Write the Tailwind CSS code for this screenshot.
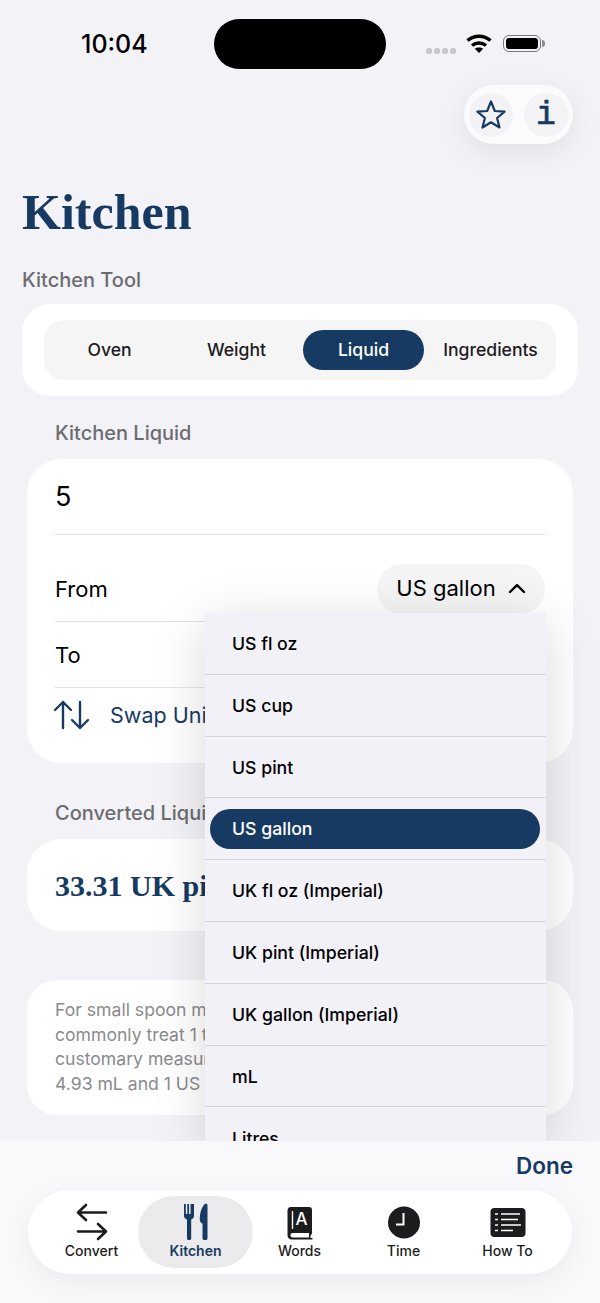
<!DOCTYPE html>
<html lang="en">
<head>
  <meta charset="UTF-8">
  <title>Kitchen</title>
  <meta name="viewport" content="width=device-width, initial-scale=1.0">
  <script src="https://cdn.jsdelivr.net/npm/@tailwindcss/browser@4"></script>
</head>
<body class="bg-[#f2f2f7]">
  <div class="relative w-[600px] h-[1303px] overflow-hidden bg-[#f2f2f7] font-['Inter','Noto_Sans',sans-serif] text-black">

    <!-- status bar -->
    <div class="h-[85px] flex items-start">
      <div class="w-[214px] pl-[81px] pt-[29px] text-[25px] leading-[30px] font-medium">10:04</div>
      <div class="mt-[19px] w-[172px] h-[50px] rounded-[25px] bg-black"></div>
      <div class="flex items-start pl-[40px] pt-[34px]">
        <div class="flex gap-[2px] mt-[14px]">
          <span class="w-[6px] h-[6px] rounded-[2px] bg-[#c9c9cd]"></span>
          <span class="w-[6px] h-[6px] rounded-[2px] bg-[#c9c9cd]"></span>
          <span class="w-[6px] h-[6px] rounded-[2px] bg-[#c9c9cd]"></span>
          <span class="w-[6px] h-[6px] rounded-[2px] bg-[#c9c9cd]"></span>
        </div>
        <svg class="ml-[10px]" width="26" height="19" viewBox="0 0 26 19" fill="none" stroke="#000" stroke-width="3.4">
          <path d="M1.5 6.5C8 0.8 18 0.8 24.5 6.5"/>
          <path d="M6 11.5C10 8.2 16 8.2 20 11.5"/>
          <path d="M13 19L8.8 14.8C11 13.2 15 13.2 17.2 14.8Z" fill="#000" stroke="none"/>
        </svg>
        <div class="ml-[11px] mt-[1px] w-[38px] h-[17px] rounded-[6px] border-[1.5px] border-[#77777c] p-[2px]">
          <div class="w-full h-full rounded-[3px] bg-black"></div>
        </div>
        <div class="ml-[1px] mt-[6px] w-[3px] h-[7px] rounded-r-full bg-[#8e8e93]"></div>
      </div>
    </div>

    <!-- star / info -->
    <div class="flex justify-end pr-[27px]">
      <div class="w-[109px] h-[59px] rounded-full bg-[#fbfbfd] shadow-[0_8px_30px_rgba(0,0,0,0.08)] flex items-center justify-between px-[5px]">
        <div class="w-[44px] h-[44px] rounded-full bg-[#f3f3f6] flex items-center justify-center">
          <svg width="32" height="32" viewBox="0 0 32 32" fill="none" stroke="#173a63" stroke-width="2.2" stroke-linejoin="round">
            <path d="M16 2.5L19.8 12L29.6 12.7L22.1 19L24.5 28.5L16 23.3L7.5 28.5L9.9 19L2.4 12.7L12.2 12Z"/>
          </svg>
        </div>
        <div class="w-[44px] h-[44px] rounded-full bg-[#f3f3f6] flex items-center justify-center pt-[3px] text-[#173a63] text-[33px] [-webkit-text-stroke:0.7px_#173a63] font-['Liberation_Mono',monospace]">i</div>
      </div>
    </div>

    <h1 class="mt-[38px] pl-[22px] text-[#173a63] text-[50px] leading-[60px] font-bold font-['Liberation_Serif',serif]">Kitchen</h1>

    <div class="mt-[22px] pl-[22px] text-[20px] leading-[32px] font-medium text-[#6c6c70]">Kitchen Tool</div>

    <div class="mt-[8px] mx-[22px] h-[92px] rounded-[28px] bg-white flex items-center px-[22px]">
      <div class="w-full h-[60px] rounded-[20px] bg-[#f5f5f5] grid grid-cols-4 items-center text-[17.6px] font-[450] text-center text-[#1c1c1e] px-[2px]">
        <div>Oven</div>
        <div>Weight</div>
        <div class="h-[40px] w-[121px] justify-self-center rounded-full bg-[#173a63] text-white flex items-center justify-center">Liquid</div>
        <div>Ingredients</div>
      </div>
    </div>

    <div class="mt-[21px] pl-[55px] text-[20px] leading-[32px] font-medium text-[#6c6c70]">Kitchen Liquid</div>

    <div class="mt-[10px] mx-[27px] h-[304px] rounded-[34px] bg-white px-[28px]">
      <div class="h-[76px] border-b border-[#e3e3e6] flex items-center text-[27px] pt-[2px]">5</div>
      <div class="h-[87px] border-b border-[#e3e3e6] flex items-center justify-between text-[22px] pt-[21px]">
        <span class="mt-[2px]">From</span>
        <span class="h-[50px] w-[168px] rounded-full bg-[#f5f5f5] flex items-center justify-center gap-[12px]">US gallon
          <svg width="18" height="11" viewBox="0 0 18 11" fill="none" stroke="#000" stroke-width="2.4" stroke-linecap="round" stroke-linejoin="round"><path d="M2 9L9 2.2L16 9"/></svg>
        </span>
      </div>
      <div class="h-[66px] border-b border-[#e3e3e6] flex items-center text-[22px] pt-[2px]">To</div>
      <div class="h-[54px] flex items-center text-[21.5px] text-[#173a63]">
        <svg class="-ml-[2px]" width="38" height="32" viewBox="0 0 38 32" fill="none" stroke="#173a63" stroke-width="2.4" stroke-linecap="round" stroke-linejoin="round">
          <path d="M10 29V3M2 11L10 3L18 11"/>
          <path d="M27 3V29M19 21L27 29L35 21"/>
        </svg>
        <span class="ml-[19px]">Swap Units</span>
      </div>
    </div>

    <div class="mt-[34px] pl-[55px] text-[20px] leading-[32px] font-medium text-[#6c6c70]">Converted Liquid</div>

    <div class="mt-[10px] mx-[27px] h-[92px] rounded-[34px] bg-white px-[28px] flex items-center text-[#173a63] text-[30px] font-bold font-['Liberation_Serif',serif]">33.31 UK pints</div>

    <div class="mt-[49px] mx-[27px] h-[135px] rounded-[30px] bg-white px-[28px] pt-[18px] text-[17.6px] leading-[24.5px] text-[#8a8a8e]">
      <p>For small spoon measures, people<br>commonly treat 1 tsp as 5 mL. In US<br>customary measures, 1 US tsp is<br>4.93 mL and 1 US tbsp is 14.79 mL.</p>
    </div>

    <!-- open menu -->
    <div class="absolute left-[205px] top-[613px] w-[341px] h-[528px] overflow-hidden bg-[#f2f1f7] shadow-[0_10px_50px_rgba(0,0,0,0.15)] text-[17.7px] font-[450]">
      <div class="h-[61.8px] border-b border-[#d4d4d9] flex items-center pl-[27px] pt-[2px]">US fl oz</div>
      <div class="h-[61.8px] border-b border-[#d4d4d9] flex items-center pl-[27px] pt-[2px]">US cup</div>
      <div class="h-[61.8px] border-b border-[#d4d4d9] flex items-center pl-[27px] pt-[2px]">US pint</div>
      <div class="h-[61.8px] border-b border-[#d4d4d9] flex items-center pl-[5px] pr-[6px]">
        <div class="w-full h-[40px] rounded-full bg-[#173a63] text-white flex items-center pl-[22px]">US gallon</div>
      </div>
      <div class="h-[61.8px] border-b border-[#d4d4d9] flex items-center pl-[27px] pt-[2px]">UK fl oz (Imperial)</div>
      <div class="h-[61.8px] border-b border-[#d4d4d9] flex items-center pl-[27px] pt-[2px]">UK pint (Imperial)</div>
      <div class="h-[61.8px] border-b border-[#d4d4d9] flex items-center pl-[27px] pt-[2px]">UK gallon (Imperial)</div>
      <div class="h-[61.8px] border-b border-[#d4d4d9] flex items-center pl-[27px] pt-[2px]">mL</div>
      <div class="h-[61.8px] flex items-center pl-[27px] pt-[2px]">Litres</div>
    </div>

    <!-- bottom bar -->
    <div class="absolute left-0 right-0 top-[1141px] h-[162px] bg-[#f9f9fc]">
      <div class="h-[49px] flex items-end justify-end pr-[27px] pb-[7px] text-[22.5px] font-semibold text-[#173a63]">Done</div>
      <div class="mx-[28px] h-[84px] rounded-[42px] bg-white shadow-[0_8px_30px_rgba(0,0,0,0.06)] grid grid-cols-[110px_115px_93px_115px_110px] text-[14px] leading-[16px] font-[450] text-[#1c1c1e]">
        <div class="flex flex-col items-center pt-[13px] pl-[17px]">
          <svg width="32" height="38" viewBox="0 0 32 38" fill="none" stroke="#1c1c1e" stroke-width="2.6" stroke-linecap="round" stroke-linejoin="round">
            <path d="M30 9.5H2M10 2L2 9.5L10 17"/>
            <path d="M2 28.5H30M22 21L30 28.5L22 36"/>
          </svg>
          <span class="mt-[2px]">Convert</span>
        </div>
        <div class="my-[6px] rounded-[36px] bg-[#ebebed] flex flex-col items-center pt-[7px] text-[#173a63] font-semibold">
          <svg width="24" height="38" viewBox="0 0 24 38" fill="#173a63">
            <path d="M0 1H1.8V11H3.3V1H5.1V11H6.6V1H8.4V1H10V13C10 15 8.5 16 7.2 16.6V35.5C7.2 37.6 3 37.6 3 35.5V16.6C1.5 16 0 15 0 13Z"/>
            <path d="M21.5 0.5C22.5 0.2 23.5 1 23.5 2.5V35.5C23.5 37.6 18.5 37.6 18.5 35.5V20.5C17 20 15.8 19 15.8 16.5C15.8 9 18 3 21.5 0.5Z"/>
          </svg>
          <span class="mt-[2px]">Kitchen</span>
        </div>
        <div class="flex flex-col items-center pt-[13px]">
          <svg width="26" height="38" viewBox="0 0 26 38">
            <path d="M4 4H22C24 4 25 5 25 7V29.5C25 31 24 32 23.5 32.5V35H25.5V36.5H5C2 36.5 0.5 34.5 0.5 32V7.5C0.5 5 2 4 4 4Z" fill="#1c1c1e"/>
            <path d="M5.5 8V26" stroke="#fff" stroke-width="1.4"/>
            <path d="M3.5 32C3.5 30.8 4.2 30 5.5 30H22V34.5H5.5C4.2 34.5 3.5 33.4 3.5 32Z" fill="#fff"/>
            <text x="14.5" y="22" text-anchor="middle" font-family="Inter, sans-serif" font-size="17" font-weight="500" fill="#fff">A</text>
          </svg>
          <span class="mt-[2px]">Words</span>
        </div>
        <div class="flex flex-col items-center pt-[13px]">
          <svg width="32" height="38" viewBox="0 0 32 38">
            <circle cx="16" cy="19.5" r="16" fill="#1c1c1e"/>
            <path d="M15.5 10V21.5H8" fill="none" stroke="#fff" stroke-width="2"/>
          </svg>
          <span class="mt-[2px]">Time</span>
        </div>
        <div class="flex flex-col items-center pt-[13px] pr-[17px]">
          <svg width="36" height="38" viewBox="0 0 36 38">
            <rect x="0.5" y="5" width="35" height="29" rx="4" fill="#1c1c1e"/>
            <g stroke="#fff" stroke-width="1.4">
              <path d="M5 11H8M5 16.5H8M5 22H8M5 27.5H8"/>
              <path d="M11 11H30M11 16.5H28M11 22H31M11 27.5H23"/>
            </g>
          </svg>
          <span class="mt-[2px]">How To</span>
        </div>
      </div>
    </div>
  </div>
</body>
</html>
